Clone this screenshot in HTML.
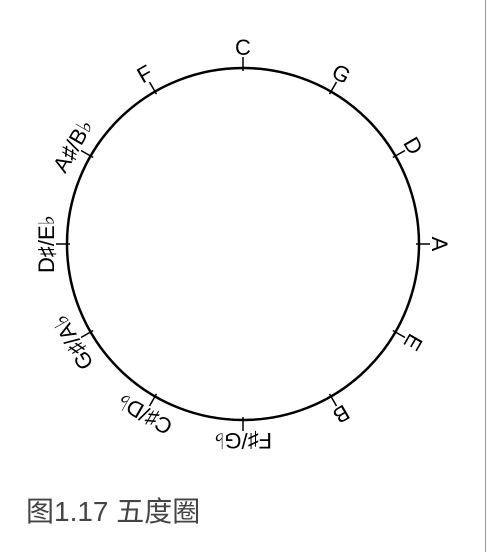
<!DOCTYPE html>
<html><head><meta charset="utf-8"><style>
html,body{margin:0;padding:0;background:#fff;}
body{width:490px;height:552px;position:relative;overflow:hidden;}
.vl{position:absolute;left:485px;top:0;width:1px;height:552px;background:#999;}
.cap{position:absolute;left:26px;top:496px;font-family:"Liberation Sans","Noto Sans CJK SC",sans-serif;font-size:28px;color:#444;line-height:32px;}
svg text{font-family:"Liberation Sans","DejaVu Sans",sans-serif;font-size:22px;}
</style></head><body>
<svg width="490" height="552" style="position:absolute;left:0;top:0">
<circle cx="243" cy="244" r="176" fill="none" stroke="#000" stroke-width="2.5"/>
<g text-anchor="middle" fill="#000">
<g transform="rotate(0 243 244)"><line x1="243" y1="57" x2="243" y2="71" stroke="#000" stroke-width="1.5"/><text x="243" y="55">C</text></g>
<g transform="rotate(30 243 244)"><line x1="243" y1="57" x2="243" y2="71" stroke="#000" stroke-width="1.5"/><text x="243" y="55">G</text></g>
<g transform="rotate(60 243 244)"><line x1="243" y1="57" x2="243" y2="71" stroke="#000" stroke-width="1.5"/><text x="243" y="55">D</text></g>
<g transform="rotate(90 243 244)"><line x1="243" y1="57" x2="243" y2="71" stroke="#000" stroke-width="1.5"/><text x="243" y="55">A</text></g>
<g transform="rotate(120 243 244)"><line x1="243" y1="57" x2="243" y2="71" stroke="#000" stroke-width="1.5"/><text x="243" y="55">E</text></g>
<g transform="rotate(150 243 244)"><line x1="243" y1="57" x2="243" y2="71" stroke="#000" stroke-width="1.5"/><text x="243" y="55">B</text></g>
<g transform="rotate(180 243 244)"><line x1="243" y1="57" x2="243" y2="71" stroke="#000" stroke-width="1.5"/><text x="243" y="55">F♯/G♭</text></g>
<g transform="rotate(210 243 244)"><line x1="243" y1="57" x2="243" y2="71" stroke="#000" stroke-width="1.5"/><text x="243" y="55">C♯/D♭</text></g>
<g transform="rotate(240 243 244)"><line x1="243" y1="57" x2="243" y2="71" stroke="#000" stroke-width="1.5"/><text x="243" y="55">G♯/A♭</text></g>
<g transform="rotate(270 243 244)"><line x1="243" y1="57" x2="243" y2="71" stroke="#000" stroke-width="1.5"/><text x="243" y="55">D♯/E♭</text></g>
<g transform="rotate(300 243 244)"><line x1="243" y1="57" x2="243" y2="71" stroke="#000" stroke-width="1.5"/><text x="243" y="55">A♯/B♭</text></g>
<g transform="rotate(330 243 244)"><line x1="243" y1="57" x2="243" y2="71" stroke="#000" stroke-width="1.5"/><text x="243" y="55">F</text></g>
</g>
</svg>
<div class="vl"></div>
<div class="cap">图1.17 五度圈</div>
</body></html>
